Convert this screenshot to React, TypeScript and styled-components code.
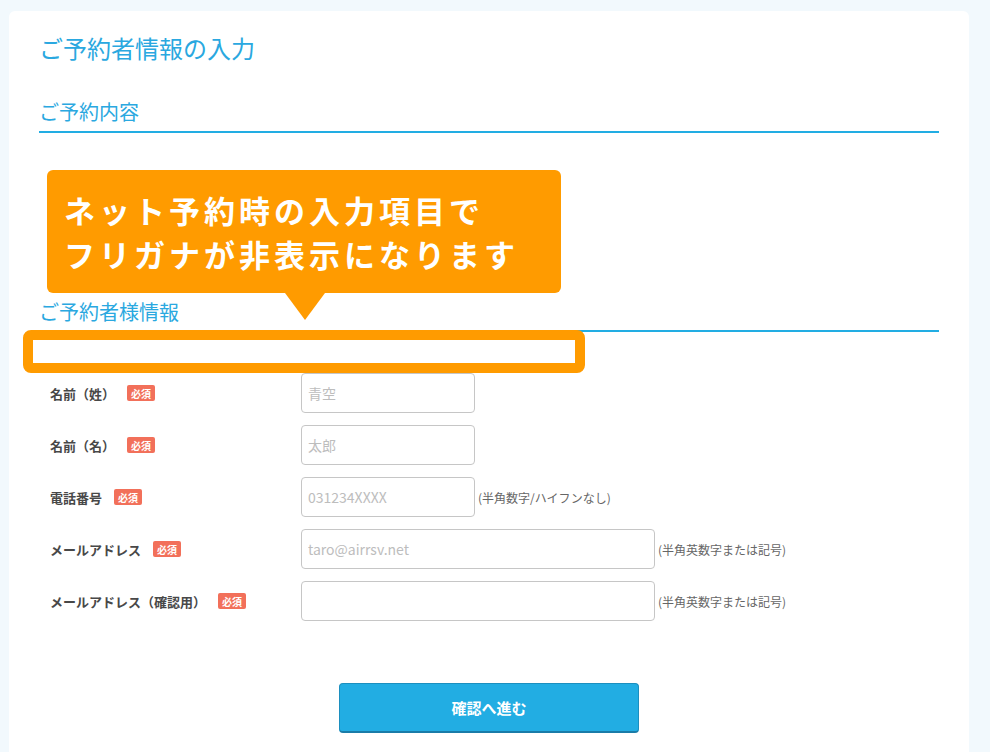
import React from "react";
import styled, { createGlobalStyle } from "styled-components";

const Global = createGlobalStyle`
  html, body { margin: 0; padding: 0; background: #f2f9fd; }
  body { font-family: "Noto Sans CJK JP", "Noto Sans", sans-serif; }
  * { box-sizing: border-box; }
`;

const Page = styled.div`
  padding: 11px 21px 0 9px;
  height: 752px;
  overflow: hidden;
`;

const Card = styled.div`
  position: relative;
  background: #fff;
  border-radius: 6px;
  padding: 21px 30px 40px 30px;
  min-height: 760px;
`;

const Title = styled.h1`
  margin: 0;
  font-size: 24px;
  line-height: 32px;
  font-weight: 400;
  color: #2aa8e0;
`;

const SectionHeading = styled.h2<{ $top: number; $pad: number }>`
  margin: ${(p) => p.$top}px 0 0 0;
  font-size: 20px;
  line-height: 26px;
  font-weight: 400;
  color: #2aa8e0;
  padding-bottom: ${(p) => p.$pad}px;
  border-bottom: 2px solid #22ade3;
`;

const Form = styled.div`
  margin-top: 41px;
  padding-left: 11px;
  display: flex;
  flex-direction: column;
  gap: 12px;
`;

const Row = styled.div`
  display: flex;
  align-items: center;
  height: 40px;
`;

const LabelCell = styled.div`
  width: 251px;
  display: flex;
  align-items: center;
  gap: 12px;
`;

const Label = styled.span`
  font-size: 13px;
  font-weight: 700;
  color: #484848;
`;

const Badge = styled.span`
  display: inline-flex;
  align-items: center;
  justify-content: center;
  width: 28px;
  height: 16px;
  border-radius: 2px;
  background: #f2705a;
  color: #fff;
  font-size: 10px;
  font-weight: 700;
`;

const Input = styled.input<{ $w: number }>`
  width: ${(p) => p.$w}px;
  height: 40px;
  border: 1px solid #c6c6c6;
  border-radius: 4px;
  padding: 0 6px;
  font-size: 14px;
  font-family: inherit;
  color: #333;
  background: #fff;
  outline: none;
  &::placeholder { color: #bdbdbd; }
`;

const Note = styled.span`
  margin-left: 3px;
  font-size: 12px;
  color: #666;
`;

const ButtonWrap = styled.div`
  display: flex;
  justify-content: center;
  margin-top: 62px;
`;

const Button = styled.button`
  width: 300px;
  height: 50px;
  border: 1px solid #1c8fbf;
  border-bottom: 2px solid #1a7ca8;
  border-radius: 4px;
  background: #22ade3;
  color: #fff;
  font-family: inherit;
  font-size: 15px;
  font-weight: 700;
`;

const Tooltip = styled.div`
  position: absolute;
  left: 38px;
  top: 159px;
  width: 514px;
  height: 123px;
  background: #ff9b00;
  border-radius: 6px;
  padding: 18px 0 0 17px;
  color: #fff;
  font-size: 31px;
  line-height: 44px;
  font-weight: 600;
  letter-spacing: 4px;
  &::after {
    content: "";
    position: absolute;
    left: 238px;
    top: 123px;
    border-left: 20px solid transparent;
    border-right: 20px solid transparent;
    border-top: 27px solid #ff9b00;
  }
`;

const Highlight = styled.div`
  position: absolute;
  left: 14px;
  top: 319px;
  width: 562px;
  height: 43px;
  border: 10px solid #ff9b00;
  border-radius: 8px;
  background: #fff;
`;

const rows = [
  { label: "名前（姓）", ph: "青空", w: 174 },
  { label: "名前（名）", ph: "太郎", w: 174 },
  { label: "電話番号", ph: "031234XXXX", w: 174, note: "(半角数字/ハイフンなし)" },
  { label: "メールアドレス", ph: "taro@airrsv.net", w: 354, note: "(半角英数字または記号)" },
  { label: "メールアドレス（確認用）", ph: "", w: 354, note: "(半角英数字または記号)" },
];

export default function App() {
  return (
    <>
      <Global />
      <Page>
        <Card>
          <Title>ご予約者情報の入力</Title>
          <SectionHeading $top={35} $pad={6}>ご予約内容</SectionHeading>
          <SectionHeading $top={166} $pad={5}>ご予約者様情報</SectionHeading>
          <Form>
            {rows.map((r) => (
              <Row key={r.label}>
                <LabelCell>
                  <Label>{r.label}</Label>
                  <Badge>必須</Badge>
                </LabelCell>
                <Input $w={r.w} placeholder={r.ph} />
                {r.note && <Note>{r.note}</Note>}
              </Row>
            ))}
          </Form>
          <ButtonWrap>
            <Button>確認へ進む</Button>
          </ButtonWrap>
          <Tooltip>
            ネット予約時の入力項目で
            <br />
            フリガナが非表示になります
          </Tooltip>
          <Highlight />
        </Card>
      </Page>
    </>
  );
}
